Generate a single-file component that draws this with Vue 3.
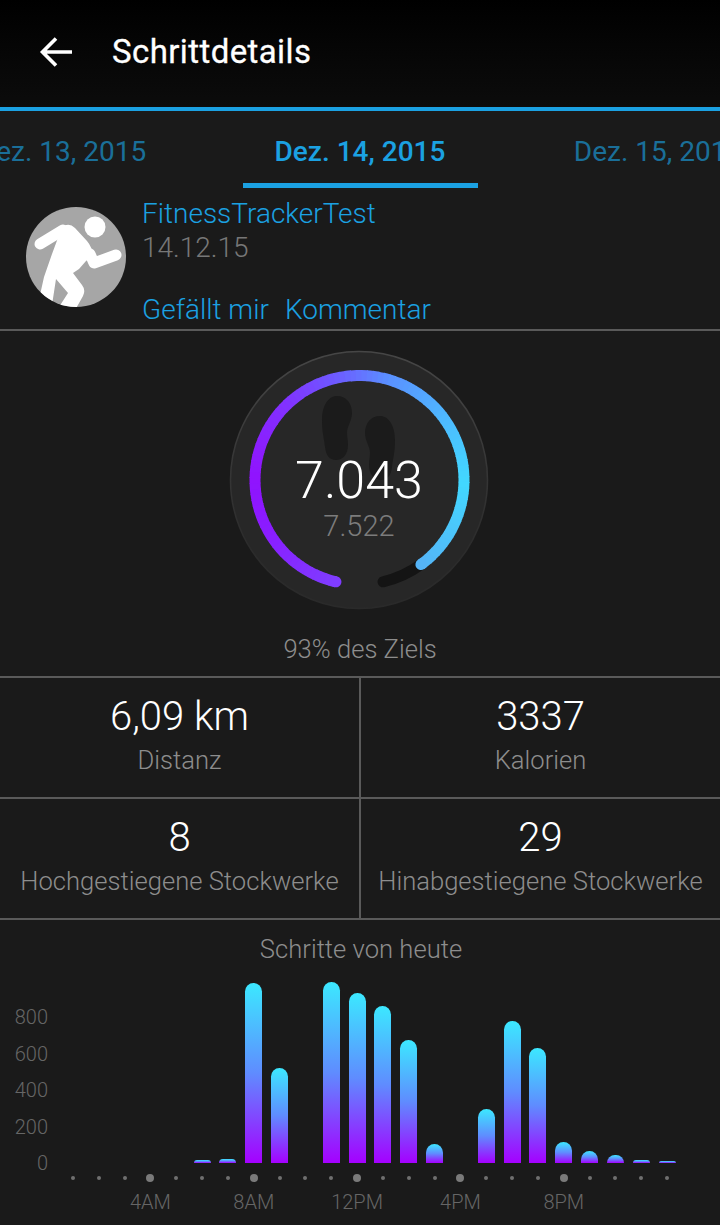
<template>
  <div class="screen">
    <header class="topbar">
      <svg class="back" width="36" height="36" viewBox="0 0 36 36">
        <path d="M34 18H5M18 4.5 4.5 18 18 31.5" fill="none" stroke="#fff" stroke-width="3.6" />
      </svg>
      <h1 class="title">Schrittdetails</h1>
    </header>

    <nav class="tabs">
      <div v-for="tab in tabs" :key="tab.label" class="tab" :class="{ active: tab.active }">
        <span class="tab-label">{{ tab.label }}</span>
      </div>
    </nav>

    <section class="profile">
      <svg class="avatar" width="100" height="100" viewBox="0 0 100 100">
        <defs>
          <clipPath id="avatar-clip"><circle cx="50" cy="50" r="50" /></clipPath>
        </defs>
        <circle cx="50" cy="50" r="50" fill="#a6a6a6" />
        <g clip-path="url(#avatar-clip)">
          <circle cx="69" cy="20" r="10.5" fill="#fff" />
          <path
            fill="#fff"
            d="M36 20Q43 15 49 21L61 34Q66 40 67 48L60 54 53 62 47 66 56 78Q60 83 57 89L48 105 33 100 42 86 30 72 26 98 14 88 18 70 26 47Z"
          />
          <path d="M14 37 37 23" fill="none" stroke="#fff" stroke-width="11" stroke-linecap="round" />
          <path
            d="M64 47 68 56 90 48"
            fill="none"
            stroke="#fff"
            stroke-width="11"
            stroke-linecap="round"
            stroke-linejoin="round"
          />
        </g>
      </svg>
      <div class="profile-text">
        <div class="name">FitnessTrackerTest</div>
        <div class="date">14.12.15</div>
        <div class="actions">
          <span>Gefällt mir</span>
          <span>Kommentar</span>
        </div>
      </div>
    </section>

    <section class="goal">
      <div class="dial">
        <svg class="dial-art" width="260" height="260" viewBox="0 0 260 260">
          <defs>
            <linearGradient id="dial-edge" x1="0" y1="0" x2="0" y2="1">
              <stop offset="0" stop-color="#464646" />
              <stop offset="0.75" stop-color="#2c2c2c" />
              <stop offset="1" stop-color="#2a2a2a" />
            </linearGradient>
          </defs>
          <circle cx="130" cy="130" r="128.5" fill="#272727" stroke="url(#dial-edge)" stroke-width="1.5" />
          <path
            fill="#1b1b1b"
            d="M108 46c9 0 15 7 15 17 0 8-5 13-5 20 0 3 1 7 1 12 0 9-5 15-12 15-7 0-10-5-11-13-1-9-3-14-3-27 0-14 6-24 15-24Z"
          />
          <path
            fill="#1b1b1b"
            d="M151 66c-9 0-15 7-15 17 0 8 5 13 5 20 0 3-1 7-1 12 0 9 5 15 12 15 7 0 10-5 11-13 1-9 3-14 3-27 0-14-6-24-15-24Z"
          />
          <path :d="blackArc" fill="none" stroke="#141414" stroke-width="11" stroke-linecap="round" />
          <g class="ring">
            <path
              v-for="seg in ringSegments"
              :key="seg.d"
              :d="seg.d"
              :stroke="seg.color"
              fill="none"
              stroke-width="11"
            />
            <path :d="startCap" fill="none" stroke="#7f3cff" stroke-width="11" stroke-linecap="round" />
            <path :d="endCap" fill="none" stroke="#55b4f7" stroke-width="11" stroke-linecap="round" />
          </g>
        </svg>
        <div class="dial-steps">7.043</div>
        <div class="dial-goal">7.522</div>
      </div>
      <div class="goal-note">93% des Ziels</div>
    </section>

    <section class="stats">
      <div v-for="stat in stats" :key="stat.label" class="stat">
        <div class="stat-value">{{ stat.value }}</div>
        <div class="stat-label">{{ stat.label }}</div>
      </div>
    </section>

    <section class="chart">
      <div class="chart-title">Schritte von heute</div>
      <div class="plot">
        <div class="y-axis">
          <span v-for="tick in yTicks" :key="tick">{{ tick }}</span>
        </div>
        <div class="plot-main">
          <div class="bars">
            <div v-for="(h, i) in hours" :key="i" class="slot">
              <div v-if="h" class="bar" :style="{ height: h + 'px' }" />
            </div>
          </div>
          <div class="dots">
            <div v-for="(h, i) in hours" :key="i" class="slot">
              <span class="dot" :class="{ big: hourLabels[i] }" />
            </div>
          </div>
          <div class="hours">
            <div v-for="(h, i) in hours" :key="i" class="slot">
              <span v-if="hourLabels[i]">{{ hourLabels[i] }}</span>
            </div>
          </div>
        </div>
      </div>
    </section>
  </div>
</template>

<script setup>
const tabs = [
  { label: 'Dez. 13, 2015' },
  { label: 'Dez. 14, 2015', active: true },
  { label: 'Dez. 15, 2015' },
]

const stats = [
  { value: '6,09 km', label: 'Distanz' },
  { value: '3337', label: 'Kalorien' },
  { value: '8', label: 'Hochgestiegene Stockwerke' },
  { value: '29', label: 'Hinabgestiegene Stockwerke' },
]

const yTicks = [800, 600, 400, 200, 0]

// bar height in px per hour slot, 0 means no bar
const hours = [0, 0, 0, 0, 0, 3, 4, 180, 95, 0, 181, 170, 157, 123, 19, 0, 54, 142, 115, 21, 12, 8, 3, 2]

const hourLabels = { 3: '4AM', 7: '8AM', 11: '12PM', 15: '4PM', 19: '8PM' }

// colour stops along the ring, degrees clockwise from 6 o'clock
const stops = [
  [13, [127, 60, 255]],
  [60, [138, 28, 255]],
  [90, [144, 19, 254]],
  [135, [130, 50, 255]],
  [165, [110, 90, 255]],
  [195, [90, 145, 255]],
  [240, [75, 192, 255]],
  [270, [66, 216, 255]],
  [324, [85, 180, 247]],
]

const mix = (deg) => {
  for (let i = 1; i < stops.length; i++) {
    if (deg <= stops[i][0]) {
      const [d0, c0] = stops[i - 1]
      const [d1, c1] = stops[i]
      const t = (deg - d0) / (d1 - d0)
      return `rgb(${c0.map((c, k) => Math.round(c + (c1[k] - c) * t)).join(',')})`
    }
  }
  return 'rgb(85,180,247)'
}

const point = (deg) => {
  const a = (deg * Math.PI) / 180
  return `${(130.5 - 104.5 * Math.sin(a)).toFixed(2)} ${(130 + 104.5 * Math.cos(a)).toFixed(2)}`
}

const arc = (from, to) => `M${point(from)}A104.5 104.5 0 0 1 ${point(to)}`

const ringSegments = []
for (let d = 13; d < 324; d += 3) {
  ringSegments.push({ d: arc(d, Math.min(d + 3.5, 324)), color: mix(d) })
}
const startCap = arc(13, 13.5)
const endCap = arc(323.5, 324)
const blackArc = arc(324, 347)
</script>

<style>
html,
body {
  margin: 0;
  background: #1a1a1a;
}
</style>

<style scoped>
.screen {
  width: 720px;
  height: 1225px;
  overflow: hidden;
  background: #1a1a1a;
  color: #fff;
  font-family: Roboto, "Liberation Sans", sans-serif;
}

.topbar {
  height: 107px;
  box-sizing: border-box;
  display: flex;
  align-items: center;
  padding: 0 0 4px 38px;
  background: linear-gradient(#000, #0c0c0c);
}

.back {
  flex: none;
  margin-right: 38px;
}

.title {
  margin: 0;
  font-size: 33px;
  font-weight: 400;
  letter-spacing: 0.4px;
  -webkit-text-stroke: 0.3px #fff;
}

.tabs {
  height: 77px;
  border-top: 4px solid #1ba1e2;
  display: flex;
  justify-content: center;
  overflow: hidden;
}

.tab {
  flex: 0 0 298px;
  display: flex;
  justify-content: center;
}

.tab-label {
  width: 235px;
  box-sizing: border-box;
  text-align: center;
  white-space: nowrap;
  font-size: 28px;
  line-height: 82px;
  color: #1a6f99;
}

.tab.active .tab-label {
  color: #1ba1e2;
  font-weight: 500;
  border-bottom: 5px solid #1ba1e2;
  height: 77px;
}

.profile {
  height: 143px;
  box-sizing: border-box;
  padding: 19px 0 0 26px;
  display: flex;
  gap: 16px;
  border-bottom: 2px solid #5a5a5a;
}

.avatar {
  flex: none;
}

.profile-text {
  margin-top: -10px;
  font-size: 28px;
  line-height: 33.5px;
}

.name,
.actions {
  color: #1ba1e2;
  font-weight: 300;
}

.date {
  color: #777;
  font-weight: 300;
}

.actions {
  margin-top: 29px;
  display: flex;
  gap: 16px;
}

.goal {
  height: 345px;
  box-sizing: border-box;
  padding-top: 19px;
  display: flex;
  flex-direction: column;
  align-items: center;
}

.dial {
  position: relative;
  width: 260px;
  height: 260px;
  margin-left: -2px;
}

.dial-art {
  display: block;
}

.ring {
  filter: blur(0.5px);
}

.dial-steps,
.dial-goal {
  position: absolute;
  left: 0;
  right: 0;
  text-align: center;
  font-weight: 300;
}

.dial-steps {
  top: 101px;
  font-size: 52px;
  line-height: 60px;
}

.dial-goal {
  top: 159px;
  font-size: 29px;
  line-height: 34px;
  color: #7c7c7c;
}

.goal-note {
  margin-top: 22px;
  font-size: 25.6px;
  line-height: 34px;
  font-weight: 300;
  color: #8d8d8d;
}

.stats {
  display: grid;
  grid-template-columns: 361px 359px;
  border-top: 2px solid #5a5a5a;
}

.stat {
  height: 121px;
  box-sizing: border-box;
  padding-top: 15px;
  text-align: center;
  border-bottom: 2px solid #5a5a5a;
}

.stat:nth-child(odd) {
  border-right: 2px solid #5a5a5a;
}

.stat-value {
  font-size: 40px;
  line-height: 48px;
  font-weight: 300;
}

.stat-label {
  margin-top: 2px;
  font-size: 25.6px;
  line-height: 34px;
  font-weight: 300;
  color: #8d8d8d;
  white-space: nowrap;
}

.chart-title {
  padding: 11px 0 0 2px;
  text-align: center;
  font-size: 25.6px;
  line-height: 36px;
  font-weight: 300;
  color: #8d8d8d;
}

.plot {
  margin-top: 15px;
  display: flex;
}

.y-axis {
  width: 48px;
  margin-right: 12px;
  padding-top: 17px;
  display: flex;
  flex-direction: column;
  align-items: flex-end;
  font-size: 20px;
  line-height: 36.5px;
  font-weight: 300;
  color: #666;
}

.plot-main {
  width: 620px;
}

.bars,
.dots,
.hours {
  display: grid;
  grid-template-columns: repeat(24, minmax(0, 1fr));
}

.slot {
  display: flex;
  justify-content: center;
  align-items: flex-end;
  white-space: nowrap;
}

.bars {
  height: 181px;
}

.bar {
  flex: none;
  width: 17px;
  border-radius: 9px 9px 0 0;
  background: linear-gradient(#3ce8ff, #5f8cff 50%, #a500ff);
}

.dots {
  height: 30px;
  align-items: center;
}

.dot {
  width: 4px;
  height: 4px;
  border-radius: 50%;
  background: #6f6f6f;
}

.dot.big {
  width: 8px;
  height: 8px;
  background: #7a7a7a;
}

.dots .slot {
  align-items: center;
}

.hours {
  font-size: 20px;
  line-height: 18px;
  font-weight: 300;
  color: #666;
}
</style>
